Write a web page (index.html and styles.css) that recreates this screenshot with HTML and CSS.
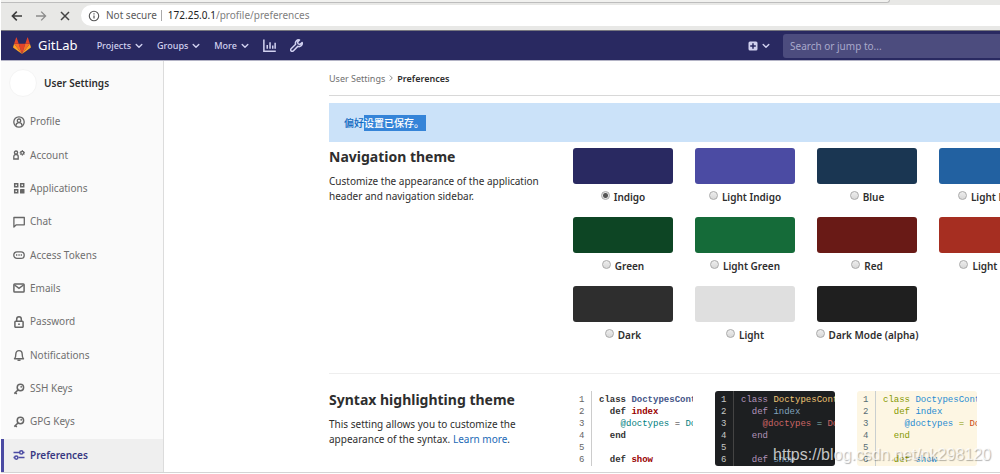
FILE: index.html
```html
<!DOCTYPE html>
<html lang="en">
<head>
<meta charset="utf-8">
<title>Preferences · User Settings · GitLab</title>
<link rel="stylesheet" href="styles.css">
</head>
<body>
<svg class="defs" aria-hidden="true">
  <symbol id="chevron" viewBox="0 0 8 8"><path d="M1.2 2.6 4 5.3l2.8-2.7" fill="none" stroke="currentColor" stroke-width="1.4" stroke-linecap="round" stroke-linejoin="round"/></symbol>
  <symbol id="key" viewBox="0 0 12 12"><g fill="none" stroke="currentColor" stroke-width="1.5"><circle cx="7.4" cy="4.5" r="3.2"/><path d="M5.2 6.8 1.3 10.6M2.2 9.4l1.6 1.6"/></g><circle cx="8.2" cy="3.8" r=".9" fill="currentColor"/></symbol>
</svg>

<div class="browser">
  <div class="tabstrip"><div class="tabedge"></div></div>
  <div class="toolbar">
    <button class="tool" aria-label="Back"><svg viewBox="0 0 12 12"><path d="M11 6H1.6M5.8 1.6 1.4 6l4.4 4.4" fill="none" stroke="#3c3c3c" stroke-width="1.6"/></svg></button>
    <button class="tool" aria-label="Forward"><svg viewBox="0 0 12 12"><path d="M1 6h9.4M6.2 1.6 10.6 6l-4.4 4.4" fill="none" stroke="#8b8b8b" stroke-width="1.3"/></svg></button>
    <button class="tool" aria-label="Stop"><svg viewBox="0 0 12 12"><path d="m2 2 8 8M10 2l-8 8" fill="none" stroke="#444" stroke-width="1.5"/></svg></button>
    <div class="omnibox">
      <svg viewBox="0 0 12 12" class="info"><circle cx="6" cy="6" r="4.7" fill="none" stroke="#555" stroke-width="1.1"/><path d="M6 5.4v3.2M6 3.2v1.2" stroke="#555" stroke-width="1.2"/></svg>
      <span class="insecure">Not secure</span>
      <span class="url"><b>172.25.0.1</b>/profile/preferences</span>
    </div>
  </div>
</div>

<header class="navbar">
  <a class="brand" href="#">
    <svg viewBox="0 0 36 34" class="logo"><path fill="#e24329" d="m18 34 6.600-20.400H11.400z"/><path fill="#fc6d26" d="m18 34-6.600-20.400H2.200zM18 34l6.600-20.400h9.200z"/><path fill="#fca326" d="M2.200 13.600.2 19.800c-.2.600 0 1.200.5 1.500L18 34zM33.800 13.600l2 6.200c.2.600 0 1.200-.5 1.500L18 34z"/><path fill="#e24329" d="M2.200 13.600h9.200L7.400 1.400c-.2-.6-1.100-.6-1.300 0zM33.800 13.600h-9.200l4-12.200c.2-.6 1.100-.6 1.300 0z"/></svg>
    <span>GitLab</span>
  </a>
  <nav class="menus">
    <button>Projects <svg class="chev"><use href="#chevron"/></svg></button>
    <button>Groups <svg class="chev"><use href="#chevron"/></svg></button>
    <button>More <svg class="chev"><use href="#chevron"/></svg></button>
    <button aria-label="Activity"><svg class="navicon" viewBox="0 0 12 12"><path d="M.8.500v10.700h11M3.900 9V5.500M6.500 9V3M9 9V6M11.200 9V3.500" fill="none" stroke="currentColor" stroke-width="1.400"/></svg></button>
    <button aria-label="Admin area"><svg class="navicon" viewBox="0 0 12 12"><path d="M8.800.9a3 3 0 0 0-3.600 3.900L1 9a1.300 1.300 0 0 0 2 2l4.200-4.200A3 3 0 0 0 11.200 3.200L9.300 5 7.500 4.500 7 2.700z" fill="none" stroke="currentColor" stroke-width="1.400" stroke-linejoin="round"/></svg></button>
  </nav>
  <button class="create" aria-label="New"><svg class="plus" viewBox="0 0 10 10"><rect x=".5" y=".5" width="9" height="9" rx="1.500" fill="currentColor"/><path d="M5 2.200v5.600M2.200 5h5.600" stroke="#292961" stroke-width="1.500"/></svg><svg class="chev"><use href="#chevron"/></svg></button>
  <input class="search" type="search" aria-label="Search or jump to" placeholder="Search or jump to...">
</header>

<div class="page">
  <aside class="sidebar">
    <a class="context" href="#"><span class="avatar"></span>User Settings</a>
    <nav class="links">
      <a href="#"><svg viewBox="0 0 12 12"><g fill="none" stroke="currentColor" stroke-width="1.300"><circle cx="6" cy="6" r="5.200"/><circle cx="6" cy="4.700" r="1.700"/><path d="M3 9.700c0-4 6-4 6 0"/></g></svg>Profile</a>
      <a href="#"><svg viewBox="0 0 12 12"><g fill="none" stroke="currentColor" stroke-width="1.300"><circle cx="3" cy="3.600" r="1.600"/><path d="M.8 10V7.600c0-2.800 4.400-2.800 4.400 0V10z"/><circle cx="9.300" cy="3.800" r="1.500"/></g><path d="M9.300 1v1M9.300 5.500v1.200M6.600 3.800h1M11 3.800h1M7.400 2l.8.8M11.200 2l-.8.8M7.400 5.700l.8-.8M11.200 5.700l-.8-.8" stroke="currentColor"/></svg>Account</a>
      <a href="#"><svg viewBox="0 0 12 12"><g fill="none" stroke="currentColor" stroke-width="1.500"><path d="M1.700 1.700h3v3h-3zM7.700 1.700h3v3h-3zM1.700 7.700h3v3h-3z"/></g><rect x="7" y="7" width="4.500" height="4.500" rx=".5" fill="currentColor"/></svg>Applications</a>
      <a href="#"><svg viewBox="0 0 12 12"><path d="M.9 11V1.500h10.400v7.300H3.300z" fill="none" stroke="currentColor" stroke-width="1.300" stroke-linejoin="round"/></svg>Chat</a>
      <a href="#"><svg viewBox="0 0 12 12"><rect x=".8" y="2.800" width="10.400" height="6.600" rx="3.200" fill="none" stroke="currentColor" stroke-width="1.300"/><path d="M3 6h1.300M5.400 6h1.300M7.700 6H9" stroke="currentColor" stroke-width="1.300"/></svg>Access Tokens</a>
      <a href="#"><svg viewBox="0 0 12 12"><g fill="none" stroke="currentColor" stroke-width="1.500"><rect x=".9" y="1.900" width="10.200" height="8.200" rx=".8"/><path d="M1.500 3 6 6.300 10.500 3"/></g></svg>Emails</a>
      <a href="#"><svg viewBox="0 0 12 12"><g fill="none" stroke="currentColor" stroke-width="1.500"><rect x="1.900" y="5.200" width="8.200" height="6.100" rx=".8"/><path d="M3.700 5V3c0-3 4.600-3 4.600 0v2"/></g><circle cx="6" cy="8.200" r=".9" fill="currentColor"/></svg>Password</a>
      <a href="#"><svg viewBox="0 0 12 12"><path d="M1.500 9.700c1.300-1 1.300-2.400 1.300-4.500 0-4.800 6.400-4.800 6.400 0 0 2.100 0 3.500 1.300 4.500z" fill="none" stroke="currentColor" stroke-width="1.400" stroke-linejoin="round"/><path d="M4.500 11.200h3" stroke="currentColor" stroke-width="1.500"/></svg>Notifications</a>
      <a href="#"><svg><use href="#key"/></svg>SSH Keys</a>
      <a href="#"><svg><use href="#key"/></svg>GPG Keys</a>
      <a href="#" class="active" aria-current="page"><svg viewBox="0 0 12 12"><g fill="none" stroke="currentColor" stroke-width="1.500"><circle cx="8.300" cy="3.400" r="1.600"/><circle cx="3.300" cy="8.600" r="1.600"/><path d="M.5 3.400h6M10 3.400h1.500M5.500 8.600h6M.5 8.600h1"/></g></svg>Preferences</a>
    </nav>
  </aside>

  <main class="content">
    <nav class="crumbs" aria-label="Breadcrumb"><a href="#">User Settings</a><svg viewBox="0 0 8 8"><path d="M2.800 1.500 5.300 4 2.800 6.500" fill="none" stroke="#888"/></svg><strong>Preferences</strong></nav>
    <div class="alert" role="status">偏好<span class="selected">设置已保存。</span></div>

    <section class="setting">
      <div class="about">
        <h2>Navigation theme</h2>
        <p>Customize the appearance of the application header and navigation sidebar.</p>
      </div>
      <div class="themes">
        <label><span class="swatch indigo"></span><span class="pick"><input type="radio" name="theme" checked>Indigo</span></label>
        <label><span class="swatch light-indigo"></span><span class="pick"><input type="radio" name="theme">Light Indigo</span></label>
        <label><span class="swatch blue"></span><span class="pick"><input type="radio" name="theme">Blue</span></label>
        <label><span class="swatch light-blue"></span><span class="pick"><input type="radio" name="theme">Light Blue</span></label>
        <label><span class="swatch green"></span><span class="pick"><input type="radio" name="theme">Green</span></label>
        <label><span class="swatch light-green"></span><span class="pick"><input type="radio" name="theme">Light Green</span></label>
        <label><span class="swatch red"></span><span class="pick"><input type="radio" name="theme">Red</span></label>
        <label><span class="swatch light-red"></span><span class="pick"><input type="radio" name="theme">Light Red</span></label>
        <label><span class="swatch dark"></span><span class="pick"><input type="radio" name="theme">Dark</span></label>
        <label><span class="swatch light"></span><span class="pick"><input type="radio" name="theme">Light</span></label>
        <label><span class="swatch dark-mode"></span><span class="pick"><input type="radio" name="theme">Dark Mode (alpha)</span></label>
      </div>
    </section>

    <section class="setting syntax">
      <div class="about">
        <h2>Syntax highlighting theme</h2>
        <p>This setting allows you to customize the appearance of the syntax. <a href="#">Learn more</a>.</p>
      </div>
      <div class="schemes">
        <div class="code white"><pre class="nums">1
2
3
4
5
6</pre><pre class="src"><b class="k">class</b> <b class="c">DoctypesController</b>
  <b class="k">def</b> <b class="f">index</b>
    <span class="v">@doctypes</span> <span class="o">=</span> <span class="t">Doctype</span>
  <b class="k">end</b>

  <b class="k">def</b> <b class="f">show</b></pre></div>
        <div class="code night"><pre class="nums">1
2
3
4
5
6</pre><pre class="src"><span class="k">class</span> <span class="c">DoctypesController</span>
  <span class="k">def</span> <span class="f">index</span>
    <span class="v">@doctypes</span> <span class="o">=</span> <span class="t">Doctype</span>
  <span class="k">end</span>

  <span class="k">def</span> <span class="f">show</span></pre></div>
        <div class="code solar"><pre class="nums">1
2
3
4
5
6</pre><pre class="src"><span class="k">class</span> <span class="c">DoctypesController</span>
  <span class="k">def</span> <span class="f">index</span>
    <span class="v">@doctypes</span> <span class="o">=</span> <span class="t">Doctype</span>
  <span class="k">end</span>

  <span class="k">def</span> <span class="f">show</span></pre></div>
      </div>
    </section>
  </main>
</div>
<div class="watermark">https://blog.csdn.net/nk298120</div>
</body>
</html>
```
FILE: styles.css
```css
* { box-sizing: border-box; }

body {
  margin: 0;
  height: 100vh;
  display: flex;
  flex-direction: column;
  overflow: hidden;
  padding: 0 0 1px 1px;
  font: 10px/15px "Noto Sans", "Noto Sans CJK SC", sans-serif;
  color: #2e2e2e;
  background: #fff;
}

a { color: inherit; text-decoration: none; }
button { border: 0; padding: 0; background: none; color: inherit; font: inherit; }
.defs { position: absolute; width: 0; height: 0; }

/* Browser chrome */
.browser { background: #e8e8e6; border-bottom: 1px solid #77777f; }
.tabstrip { height: 5px; }
.tabedge { width: 89%; height: 3px; border-bottom: 1px solid #bdbdbd; border-right: 1px solid #bdbdbd; border-radius: 0 0 4px 0; background: #f1f1ef; }
.toolbar { display: flex; align-items: center; height: 25px; padding: 0 0 4px 10px; }
.tool { width: 12px; height: 12px; margin-right: 12px; }
.tool svg { display: block; width: 12px; height: 12px; }
.omnibox { flex: 1; display: flex; align-items: center; height: 21px; margin-left: -2px; padding-left: 7px; border-radius: 11px 0 0 11px; background: #fff; }
.info { width: 12px; height: 12px; margin-right: 6px; }
.insecure { padding-right: 4px; margin-right: 6px; border-right: 1px solid #aaa; line-height: 11px; color: #5a5a5a; }
.url { color: #808080; }
.url b { font-weight: 400; color: #222; }

/* GitLab header */
.navbar { display: flex; align-items: center; height: 30px; padding-left: 12px; background: #292961; color: #d1d1f0; border-bottom: 1px solid #b4b4c6; }
.brand { display: flex; align-items: center; gap: 7px; margin-right: 19px; font-size: 13px; color: #fff; }
.logo { width: 18px; height: 17px; }
.menus { display: flex; align-items: center; gap: 14px; flex: 1; font-size: 9px; font-weight: 500; }
.menus button { display: flex; align-items: center; gap: 4px; }
.chev { width: 8px; height: 8px; }
.navicon { width: 13px; height: 13px; }
.create { display: flex; align-items: center; gap: 4px; margin-right: 13px; }
.plus { width: 10px; height: 10px; }
.search { width: 217px; height: 24px; padding: 0 7px; border: 0; border-radius: 3px 0 0 3px; background: #4c4c7e; font: inherit; }
.search::placeholder { color: #a9a9cb; opacity: 1; }

.page { flex: 1; display: flex; min-height: 0; border-bottom: 1px solid #d4d4d4; }

/* Sidebar */
.sidebar { width: 163px; flex: none; display: flex; flex-direction: column; background: #fafafa; border-right: 1px solid #dcdcdc; }
.context { display: flex; align-items: center; gap: 7px; height: 44px; padding-left: 8px; font-weight: 600; }
.avatar { width: 28px; height: 28px; border: 1px solid #f4f4f4; border-radius: 50%; background: #fff; }
.links { flex: 1; display: flex; flex-direction: column; color: #707070; }
.links a { flex: 1; display: flex; align-items: center; gap: 5px; padding-left: 12px; }
.links svg { width: 12px; height: 12px; color: #666; }
.links .active { padding-left: 9px; border-left: 3px solid #4b4ba3; background: #efefef; color: #393982; font-weight: 600; }
.links .active svg { color: #4b4ba3; }

/* Main column */
.content { flex: 1; min-width: 0; overflow: hidden; padding-left: 165px; }
.crumbs { display: flex; align-items: center; height: 35px; margin-bottom: 7px; border-bottom: 1px solid #d8d8d8; font-size: 9px; color: #707070; }
.crumbs svg { width: 8px; height: 8px; margin: 0 2px; }
.crumbs strong { color: #2e2e2e; font-weight: 600; }
.alert { padding: 12px 15px 11px; margin-bottom: 6px; background: #cbe2f9; color: #1068bf; line-height: 16px; font-weight: 500; }
.selected { display: inline-block; padding-right: 2px; background: #3584d8; color: #fff; }
.setting { display: flex; align-items: flex-start; }
.about { width: 214px; flex: none; margin-right: 30px; }
h2 { margin: 0 0 8px; font-size: 14px; line-height: 18px; font-weight: 700; }
p { margin: 0; }
p a { color: #1b69b6; }

.themes { display: grid; grid-template-columns: repeat(4, 100px); column-gap: 22px; }
.themes label { height: 69px; font-weight: 600; white-space: nowrap; }
.swatch { display: block; height: 36px; margin-bottom: 6px; border-radius: 3px; }
.pick { display: flex; justify-content: center; gap: 4px; }
.pick input { appearance: none; flex: none; width: 9px; height: 9px; margin: 1px 0 0; border: 1px solid #aaa; border-radius: 50%; background: linear-gradient(#eee, #d8d8d8); }
.pick input:checked { background: radial-gradient(circle, #555 0 2px, #e4e4e4 3px); }
.indigo { background: #292961; }
.light-indigo { background: #4b4ba3; }
.blue { background: #1a3652; }
.light-blue { background: #2261a1; }
.green { background: #0d4524; }
.light-green { background: #156b39; }
.red { background: #691a16; }
.light-red { background: #a62e21; }
.dark { background: #2e2e2e; }
.light { background: #dfdfdf; }
.dark-mode { background: #1f1f1f; }

.syntax { margin-top: 18px; padding-top: 17px; border-top: 1px solid #eee; }
.schemes { display: grid; grid-template-columns: repeat(3, 120px); column-gap: 22px; }
.code { display: flex; overflow: hidden; height: 75px; border-radius: 3px; }
pre { margin: 0; padding-top: 3px; font: 9px/12px "Liberation Mono", monospace; }
.nums { width: 19px; flex: none; padding-left: 6px; border-right: 1px solid #ccc; color: #666; }
.src { padding-left: 7px; }
.white .k { color: #333; }
.white .c { color: #445588; }
.white .f { color: #990000; }
.white .v, .white .t { color: #008080; }
.night { background: #1d1f21; }
.night .nums { color: #c5c8c6; border-color: #444; }
.night .k { color: #b294bb; }
.night .c { color: #f0c674; }
.night .f { color: #81a2be; }
.night .v, .night .t { color: #cc6666; }
.night .o { color: #8abeb7; }
.solar { background: #fdf6e3; }
.solar .nums { color: #586e75; border-color: #c9cfd0; }
.solar .k, .solar .o { color: #859900; }
.solar .c, .solar .f, .solar .v { color: #268bd2; }
.solar .t { color: #cb4b16; }

/* Site mark laid over the page corner */
.watermark { position: absolute; right: 9px; bottom: 9px; font: 16px/20px "Liberation Sans", sans-serif; color: rgba(255, 255, 255, .75); text-shadow: 1px 1px 1px rgba(0, 0, 0, .3); }
```
